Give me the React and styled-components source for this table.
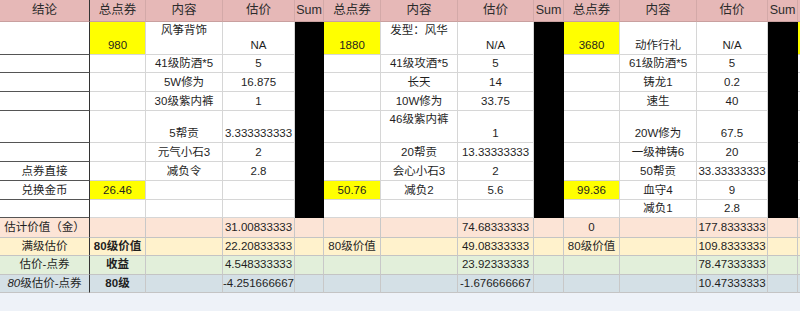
import React from "react";
import styled, { createGlobalStyle } from "styled-components";

const GlobalStyle = createGlobalStyle`
  html, body {
    margin: 0;
    padding: 0;
    background: #eef2f8;
  }
  body {
    font-family: "Liberation Sans", "Noto Sans CJK SC", sans-serif;
    font-size: 11.5px;
    color: #1f1f1f;
    overflow: hidden;
  }
`;

const COLUMNS = "90px 56px 77px 72px 29px 57px 77px 76px 30px 56px 77px 71px 30px 60px";
const ROW_HEIGHTS = "22px 33px 18px 19px 19px 32px 19px 19px 19px 18px 20px 18px 19px 18px";

const BANDS = {
  header: "#e6b8b7",
  peach: "#fce4d6",
  cream: "#fff2cc",
  green: "#e2efda",
  blue: "#d4e0e6",
};

const YELLOW = "#ffff00";

const Page = styled.div`
  width: 800px;
  height: 311px;
  overflow: hidden;
`;

const Sheet = styled.div`
  display: grid;
  grid-template-columns: ${COLUMNS};
  grid-template-rows: ${ROW_HEIGHTS};
  width: max-content;
  background: #fff;
`;

const Cell = styled.div`
  box-sizing: border-box;
  display: flex;
  justify-content: center;
  align-items: ${(p) => (p.$valign === "top" ? "flex-start" : p.$valign === "center" ? "center" : "flex-end")};
  padding: ${(p) => (p.$valign === "top" ? "1px 1px 0" : "0 1px 1px")};
  background: ${(p) => p.$bg || "#fff"};
  border-right: 1px solid ${(p) => p.$rightLine || "#d6d6d6"};
  border-bottom: 1px solid ${(p) => p.$bottomLine || "#d6d6d6"};
  font-weight: ${(p) => (p.$bold ? 700 : 400)};
  white-space: nowrap;
  overflow: hidden;
  line-height: 15px;
`;

const HeaderCell = styled(Cell)`
  align-items: center;
  padding: 0 2px;
  color: #2b2b2b;
  font-size: 12.5px;
`;

const SumCell = styled.div`
  background: #000;
`;

const Slanted = styled.span`
  font-style: italic;
`;

const header = ["结论", "总点券", "内容", "估价", "Sum", "总点券", "内容", "估价", "Sum", "总点券", "内容", "估价", "Sum", ""];

const y = (t) => ({ t, bg: YELLOW });
const top = (t) => ({ t, valign: "top" });

// 每行 10 个数据格 + 3 个 Sum 列（黑色）+ 末列
const body = [
  ["", y("980"), top("风筝背饰"), "NA", y("1880"), top("发型：风华"), "N/A", y("3680"), "动作行礼", "N/A", y("")],
  ["", "", "41级防酒*5", "5", "", "41级攻酒*5", "5", "", "61级防酒*5", "5", ""],
  ["", "", "5W修为", "16.875", "", "长天", "14", "", "铸龙1", "0.2", ""],
  ["", "", "30级紫内裤", "1", "", "10W修为", "33.75", "", "速生", "40", ""],
  ["", "", "5帮贡", "3.333333333", "", top("46级紫内裤"), "1", "", "20W修为", "67.5", ""],
  ["", "", "元气小石3", "2", "", "20帮贡", "13.33333333", "", "一级神铸6", "20", ""],
  ["点券直接", "", "减负令", "2.8", "", "会心小石3", "2", "", "50帮贡", "33.33333333", ""],
  ["兑换金币", y("26.46"), "", "", y("50.76"), "减负2", "5.6", y("99.36"), "血守4", "9", ""],
  ["", "", "", "", "", "", "", "", "减负1", "2.8", ""],
];

const summary = [
  {
    band: "peach",
    cells: ["估计价值（金）", "", "", "31.00833333", "", "", "74.68333333", "0", "", "177.8333333", ""],
  },
  {
    band: "cream",
    cells: ["满级估价", { t: "80级价值", bold: true }, "", "22.20833333", "80级价值", "", "49.08333333", "80级价值", "", "109.8333333", ""],
  },
  {
    band: "green",
    cells: ["估价-点券", { t: "收益", bold: true }, "", "4.548333333", "", "", "23.92333333", "", "", "78.47333333", ""],
  },
  {
    band: "blue",
    cells: [
      { t: <><Slanted>80</Slanted>级估价-点券</> },
      { t: "80级", bold: true },
      "",
      "-4.251666667",
      "",
      "",
      "-1.676666667",
      "",
      "",
      "10.47333333",
      "",
    ],
  },
];

const norm = (c) => (typeof c === "object" && c !== null && !React.isValidElement(c) ? c : { t: c });

// 插入 Sum 列：位置 4、8、12
const withSums = (cells, sumMaker) => {
  const out = [];
  cells.forEach((c, i) => {
    out.push(c);
    if (i === 3 || i === 6 || i === 9) out.push(sumMaker);
  });
  return out;
};

const App = () => {
  return (
    <Page>
      <GlobalStyle />
      <Sheet>
        {header.map((h, i) => (
          <HeaderCell
            key={`h${i}`}
            $bg={BANDS.header}
            $rightLine={i === 0 ? "#333" : "#d3a9a8"}
            $bottomLine="#c9a09f"
          >
            {h}
          </HeaderCell>
        ))}

        {body.map((row, r) =>
          withSums(row, "SUM").map((raw, c) => {
            const key = `b${r}-${c}`;
            if (raw === "SUM") return <SumCell key={key} />;
            const cell = norm(raw);
            return (
              <Cell
                key={key}
                $bg={cell.bg}
                $valign={cell.valign}
                $bold={cell.bold}
                $rightLine={c === 0 ? "#333" : undefined}
                $bottomLine={c === 0 ? "#555" : undefined}
              >
                {cell.t}
              </Cell>
            );
          })
        )}

        {summary.map((row, r) =>
          withSums(row.cells, "").map((raw, c) => {
            const cell = norm(raw);
            return (
              <Cell
                key={`s${r}-${c}`}
                $bg={BANDS[row.band]}
                $valign="center"
                $bold={cell.bold}
                $rightLine={c === 0 ? "#333" : "#c8c8c8"}
                $bottomLine="#c4c4c4"
              >
                {cell.t}
              </Cell>
            );
          })
        )}
      </Sheet>
    </Page>
  );
};

export default App;
